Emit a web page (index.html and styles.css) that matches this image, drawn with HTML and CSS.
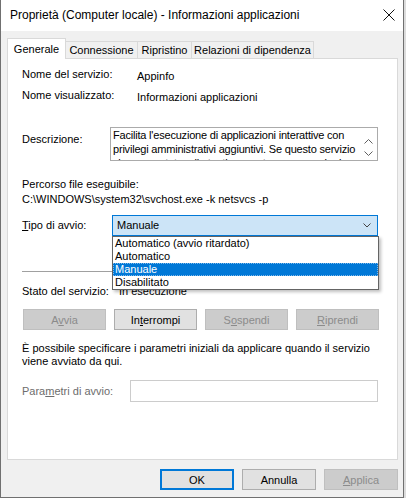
FILE: index.html
```html
<!DOCTYPE html>
<html lang="it">
<head>
  <meta charset="UTF-8">
  <title>Proprietà (Computer locale) - Informazioni applicazioni</title>
  <link rel="stylesheet" href="styles.css">
</head>
<body>
  <div class="window">
    <div class="titlebar">
      <span class="title">Proprietà (Computer locale) - Informazioni applicazioni</span>
      <svg class="close" width="12" height="12" viewBox="0 0 12 12">
        <path d="M0.5 0.5 L11.5 11.5 M11.5 0.5 L0.5 11.5" stroke="#111" stroke-width="1" fill="none"/>
      </svg>
    </div>

    <div class="tabs">
      <div class="tab active w-gen">Generale</div>
      <div class="tab w-con">Connessione</div>
      <div class="tab w-rip">Ripristino</div>
      <div class="tab w-rel">Relazioni di dipendenza</div>
    </div>

    <div class="panel">
      <div class="row r-name">
        <span class="label l-name">Nome del servizio:</span>
        <span class="value">Appinfo</span>
      </div>
      <div class="row r-disp">
        <span class="label l-name">Nome visualizzato:</span>
        <span class="value">Informazioni applicazioni</span>
      </div>

      <div class="row r-desc">
        <span class="label l-desc">Descrizione:</span>
        <div class="descbox">
          <div class="desctext">Facilita l'esecuzione di applicazioni interattive con<br>privilegi amministrativi aggiuntivi. Se questo servizio<br>viene arrestato, gli utenti non potranno eseguire le</div>
          <div class="scroll">
            <svg width="9" height="5" viewBox="0 0 9 5"><polyline points="0.5,4.5 4.5,0.5 8.5,4.5" stroke="#606060" fill="none"/></svg>
            <svg width="9" height="5" viewBox="0 0 9 5"><polyline points="0.5,0.5 4.5,4.5 8.5,0.5" stroke="#606060" fill="none"/></svg>
          </div>
        </div>
      </div>

      <div class="path-label">Percorso file eseguibile:</div>
      <div class="path">C:\WINDOWS\system32\svchost.exe -k netsvcs -p</div>

      <div class="row r-type">
        <span class="label l-type"><u>T</u>ipo di avvio:</span>
        <div class="combo-wrap">
          <div class="combo">
            <span>Manuale</span>
            <svg width="8" height="5" viewBox="0 0 8 5"><polyline points="0.5,0.5 4,4 7.5,0.5" stroke="#444" fill="none"/></svg>
          </div>
          <ul class="dropdown">
            <li>Automatico (avvio ritardato)</li>
            <li>Automatico</li>
            <li class="selected">Manuale</li>
            <li>Disabilitato</li>
          </ul>
        </div>
      </div>

      <div class="separator"></div>

      <div class="row r-state">
        <span class="label l-state">Stato del servizio:</span>
        <span>In esecuzione</span>
      </div>

      <div class="service-buttons">
        <button class="btn disabled">A<u>v</u>via</button>
        <button class="btn">In<u>t</u>errompi</button>
        <button class="btn disabled">S<u>o</u>spendi</button>
        <button class="btn disabled"><u>R</u>iprendi</button>
      </div>

      <p class="note">È possibile specificare i parametri iniziali da applicare quando il servizio viene avviato da qui.</p>

      <div class="row r-param">
        <span class="label l-param">Para<u>m</u>etri di avvio:</span>
        <div class="input"></div>
      </div>
    </div>

    <div class="footer">
      <button class="btn fbtn default">OK</button>
      <button class="btn fbtn">Annulla</button>
      <button class="btn fbtn disabled"><u>A</u>pplica</button>
    </div>
  </div>
</body>
</html>
```

FILE: styles.css
```css
* {
  box-sizing: border-box;
}
body {
  margin: 0;
  background-color: #dcdcdc;
  font-family: "Liberation Sans", Arial, sans-serif;
  font-size: 11px;
  line-height: 13px;
  color: #000;
}
.window {
  width: 404px;
  height: 498px;
  background-color: #f0f0f0;
  border-left: 1px solid #707070;
  border-right: 1px solid #707070;
  border-bottom: 1px solid #707070;
  display: flex;
  flex-direction: column;
}
.titlebar {
  height: 31px;
  background: #fff;
  display: flex;
  align-items: center;
  justify-content: space-between;
  padding: 0 8px 0 9px;
}
.title {
  font-size: 12px;
}
.close {
  margin-top: -1px;
}
.tabs {
  height: 27px;
  display: flex;
  align-items: flex-end;
  padding-left: 6px;
}
.tab {
  height: 17px;
  border: 1px solid #d9d9d9;
  border-bottom: none;
  margin-left: -1px;
  text-align: center;
  line-height: 16px;
  background: #f0f0f0;
}
.tab.active {
  height: 21px;
  margin-bottom: -1px;
  background: #fff;
  position: relative;
  z-index: 1;
  line-height: 20px;
  margin-left: 0;
}
.w-gen { width: 59px; }
.w-con { width: 73px; }
.w-rip { width: 55px; }
.w-rel { width: 123px; }

.panel {
  margin-left: 6px;
  width: 391px;
  height: 402px;
  background: #fff;
  border: 1px solid #d9d9d9;
  padding: 0 18px 0 14px;
}
.row {
  display: flex;
  align-items: flex-start;
}
.label {
  flex: none;
}
.l-name { width: 115px; }
.l-desc { width: 88px; padding-top: 6px; }
.l-type { width: 90px; }
.l-state { width: 97px; }
.l-param { width: 108px; color: #6d6d6d; }
.value {
  padding-top: 2px;
}
.r-name { margin-top: 9px; }
.r-disp { margin-top: 6px; }
.r-desc { margin-top: 23px; }

.descbox {
  width: 268px;
  height: 34px;
  border: 1px solid #ababab;
  display: flex;
  overflow: hidden;
}
.desctext {
  flex: 1;
  padding: 0 0 0 2px;
  line-height: 14px;
  letter-spacing: -0.2px;
  white-space: nowrap;
  overflow: hidden;
}
.scroll {
  width: 15px;
  flex: none;
  display: flex;
  flex-direction: column;
  align-items: center;
  gap: 7px;
  padding-top: 11px;
  padding-right: 2px;
}
.scroll svg {
  display: block;
}

.path-label { margin-top: 17px; }
.path { margin-top: 2px; }

.r-type {
  margin-top: 9px;
  align-items: center;
}
.combo-wrap {
  position: relative;
}
.combo {
  width: 266px;
  height: 21px;
  background: #cce4f7;
  border: 1px solid #0078d7;
  display: flex;
  align-items: center;
  justify-content: space-between;
  padding: 0 6px 0 4px;
}
.dropdown {
  position: absolute;
  top: 21px;
  left: 0;
  width: 267px;
  height: 54px;
  margin: 0;
  padding: 0;
  list-style: none;
  background: #fff;
  border: 1px solid #646464;
  box-shadow: 2px 2px 3px rgba(0, 0, 0, 0.25);
  z-index: 2;
}
.dropdown li {
  height: 13px;
  line-height: 13px;
  padding-left: 2px;
}
.dropdown li.selected {
  background: #0078d7;
  color: #fff;
  outline: 1px dotted #7fb9ea;
  outline-offset: -1px;
}

.separator {
  margin-top: 35px;
  height: 1px;
  background: #a0a0a0;
}
.r-state { margin-top: 13px; }

.service-buttons {
  margin-top: 11px;
  display: grid;
  grid-template-columns: repeat(4, 1fr);
  gap: 8px;
  padding-left: 1px;
}
.btn {
  font-family: "Liberation Sans", Arial, sans-serif;
  font-size: 11px;
  height: 21px;
  background: #e1e1e1;
  border: 1px solid #adadad;
  color: #000;
  padding: 0;
}
.btn.disabled {
  background: #cccccc;
  border-color: #bfbfbf;
  color: #8b8b8b;
}
.btn.default {
  border: 2px solid #0078d7;
}

.note {
  margin: 12px 0 0 0;
  line-height: 13px;
}
.r-param {
  margin-top: 12px;
  align-items: center;
}
.input {
  width: 248px;
  height: 22px;
  border: 1px solid #cccccc;
  background: #fff;
}

.footer {
  display: flex;
  justify-content: flex-end;
  gap: 8px;
  padding: 9px 5px 0 0;
}
.fbtn {
  width: 74px;
}
```
